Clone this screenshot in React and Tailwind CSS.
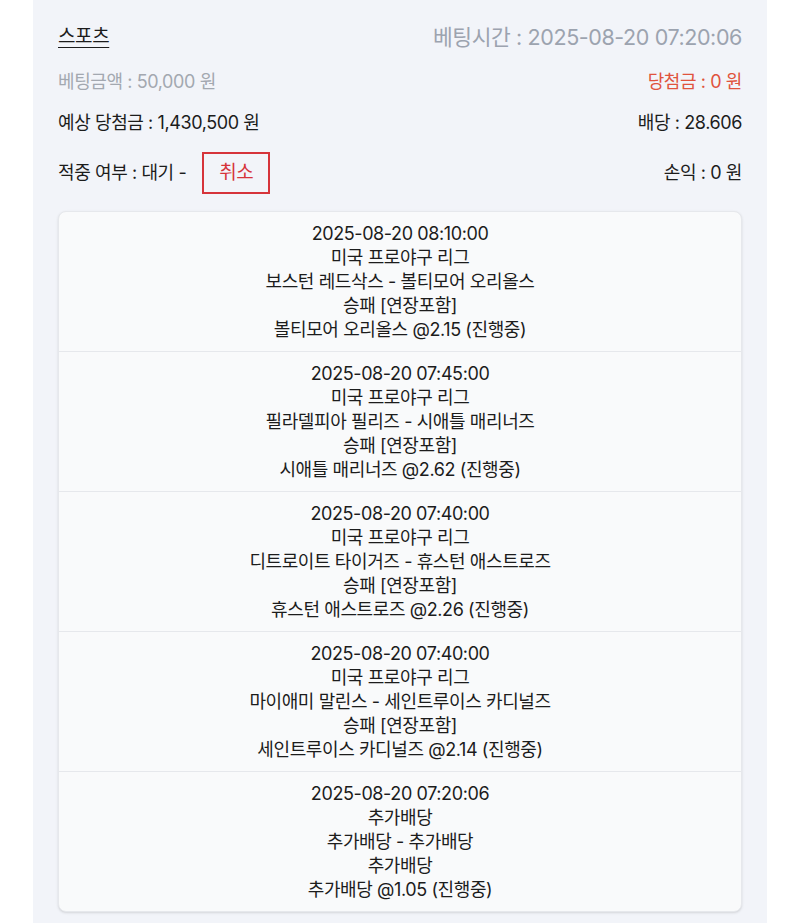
import React from "react";

const picks = [
  {
    time: "2025-08-20 08:10:00",
    league: "미국 프로야구 리그",
    match: "보스턴 레드삭스 - 볼티모어 오리올스",
    market: "승패 [연장포함]",
    pick: "볼티모어 오리올스 @2.15 (진행중)",
  },
  {
    time: "2025-08-20 07:45:00",
    league: "미국 프로야구 리그",
    match: "필라델피아 필리즈 - 시애틀 매리너즈",
    market: "승패 [연장포함]",
    pick: "시애틀 매리너즈 @2.62 (진행중)",
  },
  {
    time: "2025-08-20 07:40:00",
    league: "미국 프로야구 리그",
    match: "디트로이트 타이거즈 - 휴스턴 애스트로즈",
    market: "승패 [연장포함]",
    pick: "휴스턴 애스트로즈 @2.26 (진행중)",
  },
  {
    time: "2025-08-20 07:40:00",
    league: "미국 프로야구 리그",
    match: "마이애미 말린스 - 세인트루이스 카디널즈",
    market: "승패 [연장포함]",
    pick: "세인트루이스 카디널즈 @2.14 (진행중)",
  },
  {
    time: "2025-08-20 07:20:06",
    league: "추가배당",
    match: "추가배당 - 추가배당",
    market: "추가배당",
    pick: "추가배당 @1.05 (진행중)",
  },
];

const App = () => {
  return (
    <div
      className="min-h-screen bg-white"
      style={{ fontFamily: '"Inter", "Noto Sans CJK KR", sans-serif' }}
    >
      <div className="mx-auto w-[734px] min-h-screen bg-[#f2f4f9] px-[25px] pt-[21px] pb-6 text-[#1c1c1c] tracking-tight">
        {/* Header */}
        <div className="flex h-8 items-center justify-between">
          <span className="text-[19px] underline underline-offset-4">스포츠</span>
          <span className="text-[21.5px] text-[#9ca3af]">
            베팅시간 : 2025-08-20 07:20:06
          </span>
        </div>

        <div className="mt-[17px] flex h-6 items-center justify-between text-lg leading-6">
          <span className="text-[#a3a8b0]">베팅금액 : 50,000 원</span>
          <span className="text-[#e0533d]">당첨금 : 0 원</span>
        </div>

        <div className="mt-[17px] flex h-6 items-center justify-between text-lg leading-6">
          <span>예상 당첨금 : 1,430,500 원</span>
          <span>배당 : 28.606</span>
        </div>

        <div className="mt-[17px] flex h-[42px] items-center justify-between text-lg">
          <div className="flex items-center">
            <span>적중 여부 : 대기 -</span>
            <button className="ml-4 flex h-[42px] w-[68px] items-center justify-center border-2 border-[#d6343a] text-[19px] text-[#d6343a]">
              취소
            </button>
          </div>
          <span>손익 : 0 원</span>
        </div>

        {/* Bet picks */}
        <div className="mt-[17px] overflow-hidden rounded-lg border border-[#e6e8ec] bg-[#f9fafb] shadow-sm">
          {picks.map((p, i) => (
            <div
              key={i}
              className={`flex flex-col items-center pt-[10px] pb-[9px] text-lg leading-6 ${
                i < picks.length - 1 ? "border-b border-[#e6e8ec]" : ""
              }`}
            >
              <span>{p.time}</span>
              <span>{p.league}</span>
              <span>{p.match}</span>
              <span>{p.market}</span>
              <span>{p.pick}</span>
            </div>
          ))}
        </div>
      </div>
    </div>
  );
};

export default App;
